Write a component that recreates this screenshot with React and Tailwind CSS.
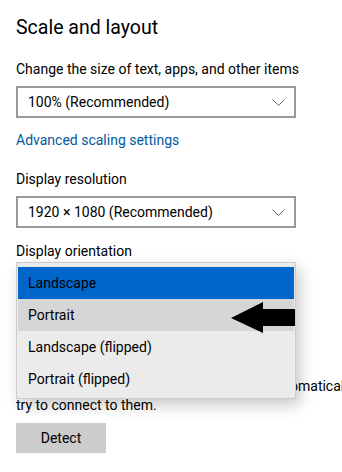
import React from "react";

function Chevron() {
  return (
    <svg width="13" height="7" viewBox="0 0 13 7" className="shrink-0">
      <path d="M0.5 0.5 L6.5 6.5 L12.5 0.5" fill="none" stroke="#666" strokeWidth="1" />
    </svg>
  );
}

function Select({ value }) {
  return (
    <div className="mt-[7px] flex h-[32px] w-[280px] items-center justify-between border-2 border-[#999999] bg-white pl-[10px] pr-[9px] text-[14px] text-black">
      <span>{value}</span>
      <Chevron />
    </div>
  );
}

const options = ["Landscape", "Portrait", "Landscape (flipped)", "Portrait (flipped)"];

export default function App() {
  return (
    <div className="relative h-[472px] w-[342px] overflow-hidden bg-white px-4 text-black [font-family:Roboto,'Segoe_UI',sans-serif]">
      <h1 className="pt-[14px] text-[19.5px] leading-[28px] font-normal">Scale and layout</h1>
      <p className="mt-[17px] text-[14px] leading-[20px]">Change the size of text, apps, and other items</p>
      <Select value="100% (Recommended)" />
      <p className="mt-[12px] text-[14px] leading-[20px] text-[#005a9e]">Advanced scaling settings</p>
      <p className="mt-[19px] text-[14px] leading-[20px]">Display resolution</p>
      <Select value="1920 × 1080 (Recommended)" />
      <p className="mt-[13px] text-[14px] leading-[20px]">Display orientation</p>
      {/* space taken by the orientation box, covered by its open list */}
      <div className="h-[116px]" />
      <div className="text-[14px] leading-[19px]">
        <p className="whitespace-nowrap">Older displays might not always connect automatically. Select Detect to</p>
        <p>try to connect to them.</p>
      </div>
      <button className="mt-[8px] h-[30px] w-[90px] bg-[#cccccc] text-[14px] text-black">Detect</button>

      {/* open dropdown */}
      <div className="absolute left-4 top-[262px] w-[280px] border border-[#cccccc] bg-[#ebebeb] px-px pt-[4px] pb-[3px] shadow-[4px_6px_14px_rgba(0,0,0,0.22)]">
        {options.map((o, i) => (
          <div
            key={o}
            className={
              "flex h-[32px] items-center pl-[10px] text-[14px] text-black " +
              (i === 0 ? "bg-[#0066cc]" : i === 1 ? "bg-[#d6d6d6]" : "")
            }
          >
            {o}
          </div>
        ))}
        <svg className="absolute left-[214px] top-[39px]" width="64" height="32" viewBox="0 0 64 32">
          <polygon points="0,16 32,0 32,7 64,7 64,24 32,24 32,31" fill="#000" />
        </svg>
      </div>
    </div>
  );
}
